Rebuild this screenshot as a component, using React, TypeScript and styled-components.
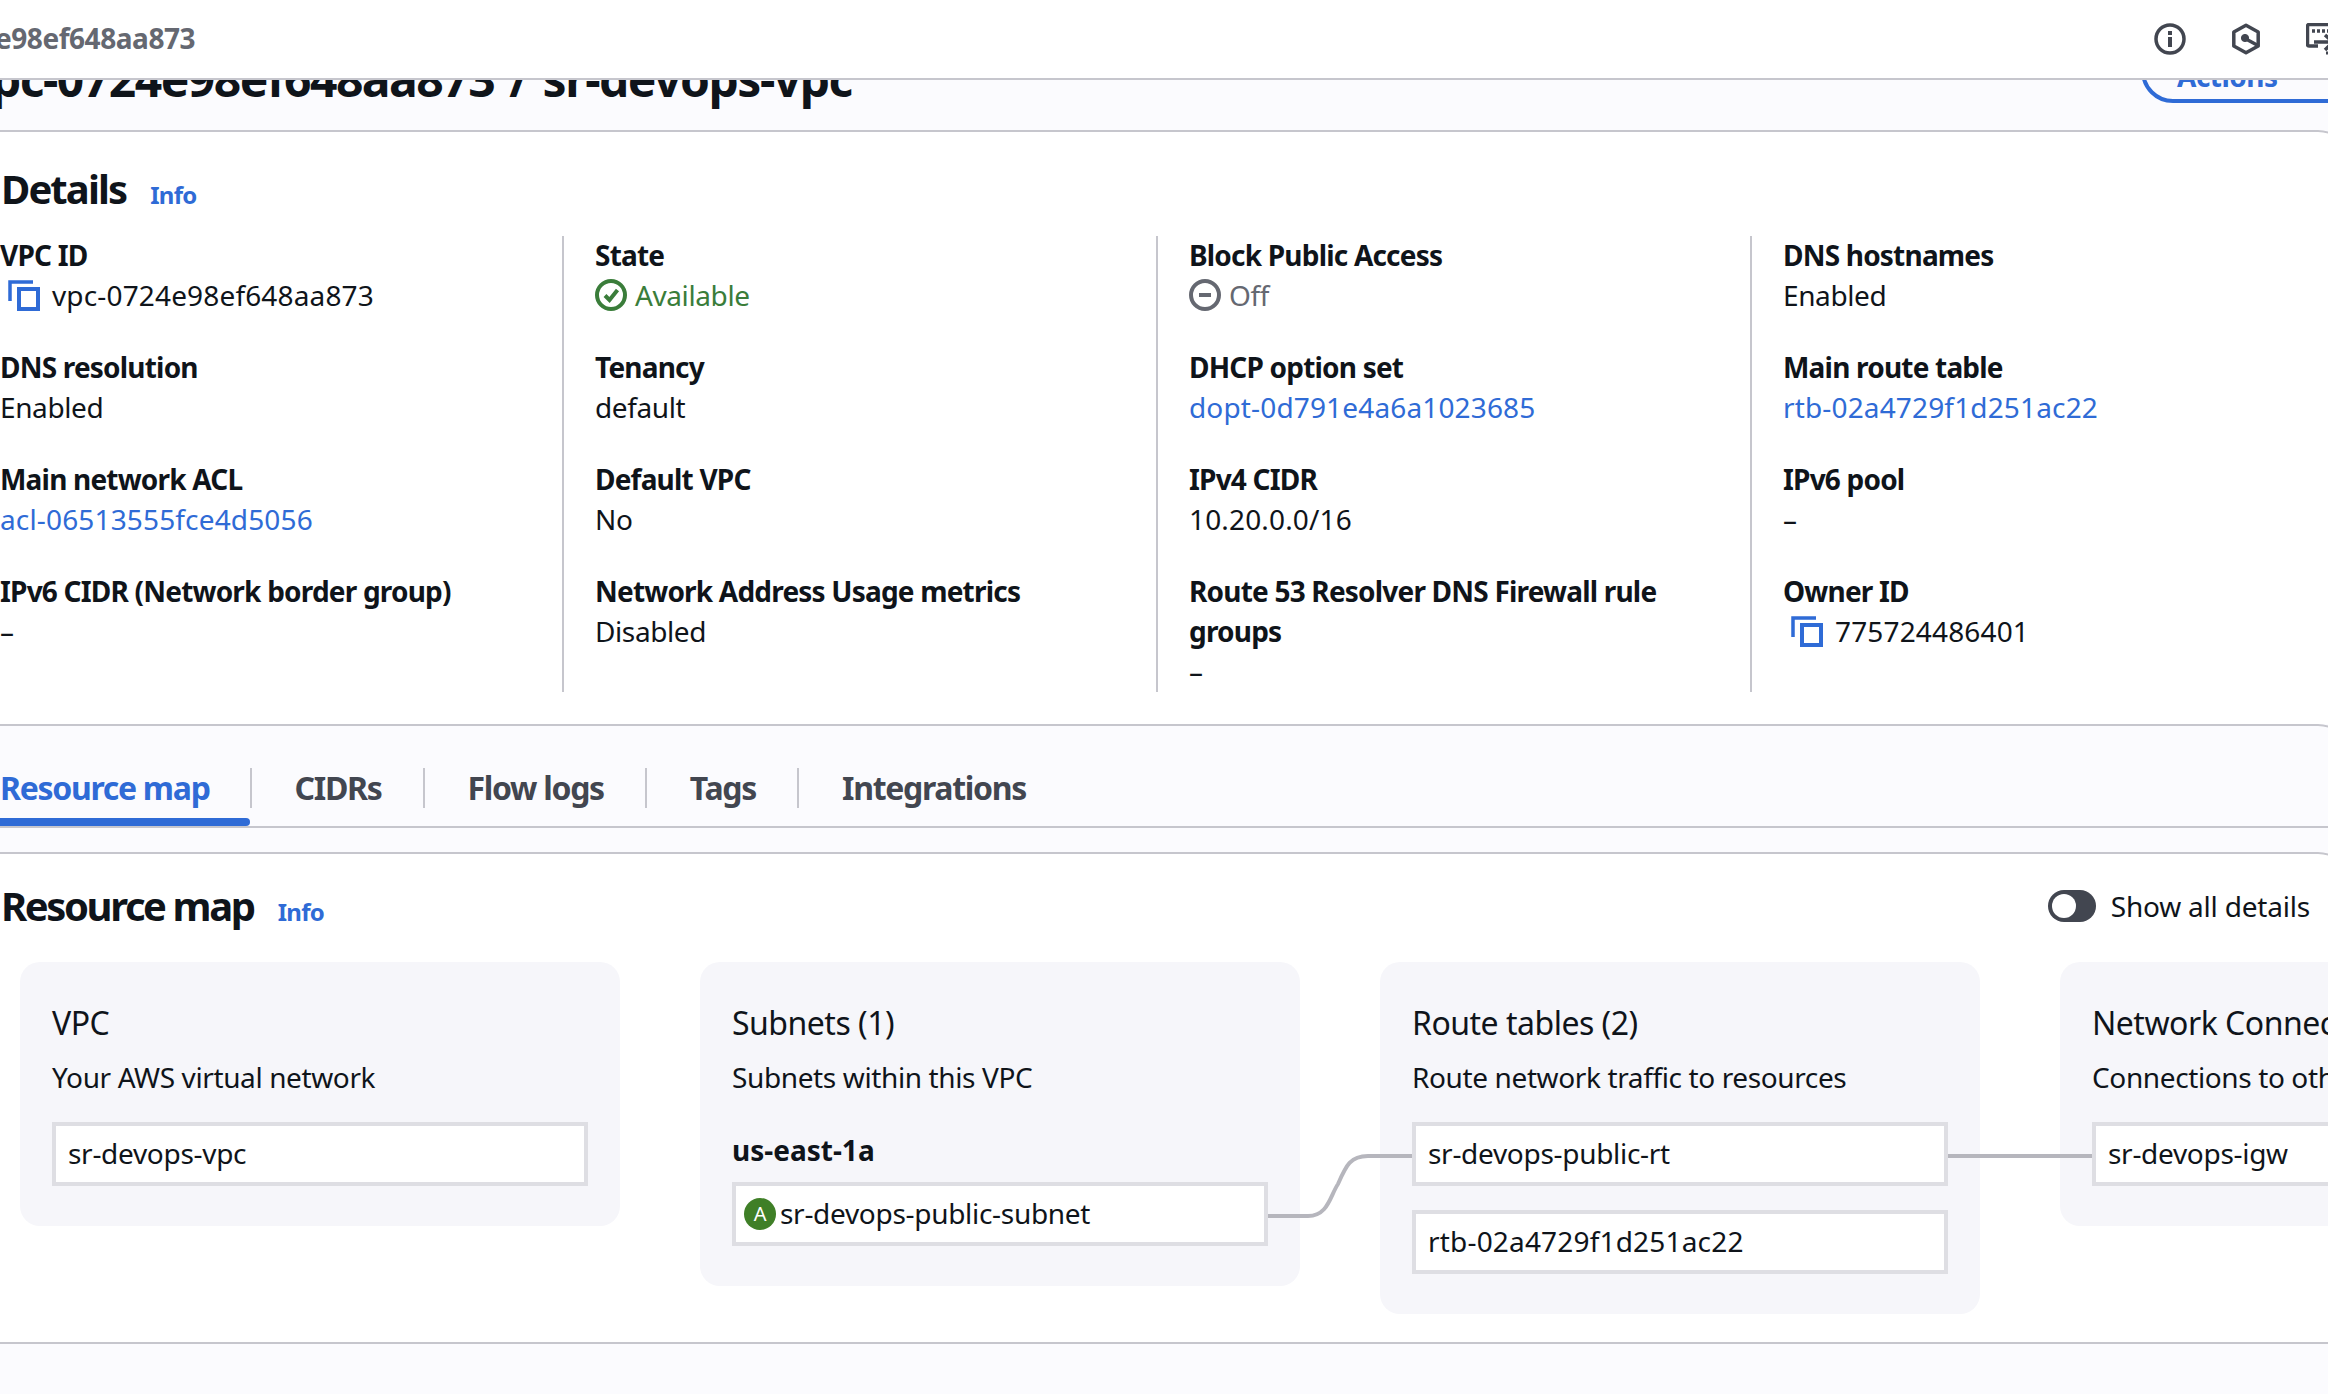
import styled, { createGlobalStyle } from 'styled-components';

const GlobalStyle = createGlobalStyle`
  html, body {
    margin: 0;
    padding: 0;
    background: #fbfbfe;
  }
  body {
    font-family: "Noto Sans", "Open Sans", sans-serif;
    color: #0f141a;
  }
`;

const Page = styled.div`
  width: 2328px;
  height: 1394px;
  overflow: hidden;
  background: #fbfbfe;
`;

const TopBar = styled.header`
  height: 78px;
  display: flex;
  align-items: center;
  background: #fff;
  border-bottom: 2px solid #c6c6cd;
  position: relative;
  z-index: 1;
`;

const Crumb = styled.span`
  margin-left: -5px;
  padding-bottom: 3px;
  font-size: 28px;
  font-weight: 700;
  letter-spacing: -0.45px;
  color: #656871;
`;

const TopIcons = styled.div`
  display: flex;
  gap: 44px;
  margin-left: auto;
  margin-right: -10px;
  color: #424650;
`;

const TitleBand = styled.div`
  height: 50px;
  overflow: hidden;
  display: flex;
  justify-content: space-between;
  align-items: flex-start;
`;

const PageTitle = styled.h1`
  margin: -31px 0 0 -35px;
  font-size: 48px;
  line-height: 60px;
  font-weight: 700;
  letter-spacing: -1.5px;
  word-spacing: 4px;
  white-space: nowrap;
`;

const ActionsButton = styled.button`
  flex: none;
  width: 240px;
  height: 64px;
  margin: -41px -53px 0 0;
  padding: 10px 0 0 32px;
  box-sizing: border-box;
  display: flex;
  align-items: center;
  gap: 24px;
  background: transparent;
  border: 4px solid #2f6bd6;
  border-radius: 40px;
  color: #2f6bd6;
  font: 700 28px/40px "Noto Sans", sans-serif;
  letter-spacing: -0.5px;
`;

const Panel = styled.section`
  width: 2350px;
  box-sizing: border-box;
  background: #fff;
  border-top: 2px solid #c6c6cd;
  border-top-right-radius: 32px;
`;

const DetailsPanel = styled(Panel)`
  height: 594px;
  padding-top: 33px;
`;

const HeadingRow = styled.div`
  display: flex;
  align-items: baseline;
  gap: 24px;
`;

const SectionTitle = styled.h2`
  margin: 0 0 0 1px;
  font-size: 40px;
  line-height: 48px;
  font-weight: 700;
  letter-spacing: -1.9px;
`;

const MapTitle = styled(SectionTitle)`
  letter-spacing: -2.4px;
`;

const InfoLink = styled.a`
  font-size: 24px;
  font-weight: 700;
  letter-spacing: -0.7px;
  color: #2f6bd6;
`;

const DetailColumns = styled.div`
  display: grid;
  grid-template-columns: 562px 594px 594px 578px;
  margin-top: 23px;
  width: 2328px;
`;

const DetailColumn = styled.div<{ $first?: boolean }>`
  height: 456px;
  padding-left: ${(p) => (p.$first ? '0' : '31px')};
  border-left: ${(p) => (p.$first ? 'none' : '2px solid #c6c6cd')};
`;

const FieldStack = styled.div`
  display: flex;
  flex-direction: column;
  gap: 32px;
  margin-top: -1px;
`;

const Field = styled.div`
  font-size: 28px;
  line-height: 40px;
`;

const FieldLabel = styled.div`
  font-weight: 700;
  letter-spacing: -0.8px;
`;

const FieldValue = styled.div<{ $tone?: 'link' | 'green' | 'grey'; $numeric?: boolean }>`
  display: flex;
  align-items: center;
  letter-spacing: ${(p) => (p.$numeric ? '0.15px' : '-0.4px')};
  color: ${(p) =>
    p.$tone === 'link'
      ? '#2f6bd6'
      : p.$tone === 'green'
        ? '#3a7d3a'
        : p.$tone === 'grey'
          ? '#656871'
          : '#0f141a'};
  svg {
    flex: none;
  }
`;

const CopyWrap = styled.span`
  display: inline-flex;
  margin: 0 12px 0 8px;
`;

const StatusWrap = styled.span`
  display: inline-flex;
  margin-right: 8px;
`;

const TabsPanel = styled(Panel)`
  background: #fbfbfe;
  height: 128px;
`;

const TabRow = styled.div`
  width: 2328px;
  height: 58px;
  padding-top: 42px;
  display: flex;
  align-items: flex-start;
  border-bottom: 2px solid #c6c6cd;
`;

const Tab = styled.div<{ $active?: boolean; $last?: boolean }>`
  position: relative;
  height: 40px;
  padding: ${(p) => (p.$active ? '0 40px 0 0' : '0 41px 0 43px')};
  border-right: ${(p) => (p.$last ? 'none' : '2px solid #c6c6cd')};
  font-size: 32px;
  line-height: 40px;
  font-weight: 700;
  letter-spacing: -1.3px;
  color: ${(p) => (p.$active ? '#2f6bd6' : '#424650')};

  ${(p) =>
    p.$active &&
    `&::after {
      content: '';
      position: absolute;
      left: 0;
      right: 0;
      bottom: -18px;
      height: 8px;
      background: #2f6bd6;
      border-radius: 0 4px 4px 0;
    }`}
`;

const MapPanel = styled(Panel)`
  height: 492px;
  padding-top: 28px;
  border-bottom: 2px solid #c6c6cd;
  border-bottom-right-radius: 0;
`;

const MapHeader = styled.div`
  width: 2328px;
  box-sizing: border-box;
  padding-right: 18px;
  display: flex;
  align-items: center;
  justify-content: space-between;
`;

const ToggleRow = styled.div`
  display: flex;
  align-items: center;
  gap: 15px;
  font-size: 28px;
  line-height: 40px;
  letter-spacing: -0.2px;
`;

const ToggleTrack = styled.span`
  width: 48px;
  height: 32px;
  box-sizing: border-box;
  padding: 4px;
  border-radius: 16px;
  background: #424650;
`;

const ToggleKnob = styled.span`
  display: block;
  width: 24px;
  height: 24px;
  border-radius: 50%;
  background: #fff;
`;

const MapBody = styled.div`
  position: relative;
  width: 2328px;
  margin-top: 32px;
  padding-left: 20px;
  box-sizing: border-box;
  display: flex;
  align-items: flex-start;
  gap: 80px;
`;

const Connectors = styled.svg`
  position: absolute;
  left: 0;
  top: 0;
  pointer-events: none;
`;

const Card = styled.div`
  flex: none;
  width: 600px;
  box-sizing: border-box;
  padding: 41px 32px 40px;
  background: #f6f6fa;
  border-radius: 20px;
`;

const CardTitle = styled.div`
  font-size: 32px;
  line-height: 40px;
  letter-spacing: -0.5px;
  white-space: nowrap;
`;

const CardText = styled.div`
  margin-top: 14px;
  font-size: 28px;
  line-height: 40px;
  letter-spacing: -0.38px;
  white-space: nowrap;
`;

const ZoneLabel = styled.div`
  margin-top: 33px;
  font-size: 28px;
  line-height: 40px;
  font-weight: 700;
`;

const NodeList = styled.div<{ $tight?: boolean }>`
  margin-top: ${(p) => (p.$tight ? '12px' : '25px')};
  display: flex;
  flex-direction: column;
  gap: 24px;
`;

const Node = styled.div<{ $badge?: boolean; $numeric?: boolean }>`
  width: 536px;
  height: 64px;
  box-sizing: border-box;
  display: flex;
  align-items: center;
  gap: 4px;
  padding: 0 0 2px ${(p) => (p.$badge ? '8px' : '12px')};
  background: #fff;
  border: 4px solid #dedee3;
  font-size: 28px;
  letter-spacing: ${(p) => (p.$numeric ? '0.18px' : '-0.3px')};
  white-space: nowrap;
`;

const AzBadge = styled.span`
  width: 32px;
  height: 32px;
  flex: none;
  display: flex;
  align-items: center;
  justify-content: center;
  margin-top: 2px;
  border-radius: 50%;
  background: #3f7f27;
  color: #fff;
  font-size: 20px;
  line-height: 32px;
`;

const InfoIcon = () => (
  <svg width="32" height="32" viewBox="0 0 32 32" fill="none" stroke="currentColor">
    <circle cx="16" cy="16" r="14" strokeWidth="3.5" />
    <path d="M16 14v10" strokeWidth="4" />
    <path d="M16 8v4" strokeWidth="4" />
  </svg>
);

const HexIcon = () => (
  <svg width="32" height="32" viewBox="0 0 32 32" fill="none" stroke="currentColor">
    <path d="M16 2.2 L28.2 9 V23 L16 29.8 L3.8 23 V9 Z" strokeWidth="3.5" strokeLinejoin="round" />
    <circle cx="15" cy="15" r="3.6" fill="currentColor" strokeWidth="1" />
    <path d="M16 16 L27 22" strokeWidth="3.5" />
  </svg>
);

const ShellIcon = () => (
  <svg width="32" height="32" viewBox="0 0 32 32" fill="none" stroke="currentColor">
    <path d="M12 23H3a1.5 1.5 0 0 1-1.5-1.5V3A1.5 1.5 0 0 1 3 1.5h30" strokeWidth="3.5" />
    <path d="M6 8h3M11 8h3M16 8h3M21 8h3" strokeWidth="3.5" />
    <path d="M8 19h18M19 12l8 7-8 8" strokeWidth="3.5" />
    <path d="M20 30h3" strokeWidth="3" />
  </svg>
);

const CopyIcon = () => (
  <svg width="32" height="32" viewBox="0 0 32 32" fill="none" stroke="#2f6bd6" strokeWidth="4">
    <path d="M2 22V3h23" strokeWidth="3.5" />
    <rect x="11" y="10" width="19" height="20" />
  </svg>
);

const CheckIcon = () => (
  <svg width="32" height="32" viewBox="0 0 32 32" fill="none" stroke="currentColor" strokeWidth="4">
    <circle cx="16" cy="16" r="14" />
    <path d="M10 16.5l4.5 4.5 8-10" />
  </svg>
);

const OffIcon = () => (
  <svg width="32" height="32" viewBox="0 0 32 32" fill="none" stroke="currentColor" strokeWidth="4">
    <circle cx="16" cy="16" r="14" />
    <path d="M10 16h12" />
  </svg>
);

type FieldData = {
  label: string;
  value: string;
  tone?: 'link' | 'green' | 'grey';
  icon?: 'copy' | 'check' | 'off';
};

const columns: FieldData[][] = [
  [
    { label: 'VPC ID', value: 'vpc-0724e98ef648aa873', icon: 'copy' },
    { label: 'DNS resolution', value: 'Enabled' },
    { label: 'Main network ACL', value: 'acl-06513555fce4d5056', tone: 'link' },
    { label: 'IPv6 CIDR (Network border group)', value: '–' },
  ],
  [
    { label: 'State', value: 'Available', tone: 'green', icon: 'check' },
    { label: 'Tenancy', value: 'default' },
    { label: 'Default VPC', value: 'No' },
    { label: 'Network Address Usage metrics', value: 'Disabled' },
  ],
  [
    { label: 'Block Public Access', value: 'Off', tone: 'grey', icon: 'off' },
    { label: 'DHCP option set', value: 'dopt-0d791e4a6a1023685', tone: 'link' },
    { label: 'IPv4 CIDR', value: '10.20.0.0/16' },
    { label: 'Route 53 Resolver DNS Firewall rule groups', value: '–' },
  ],
  [
    { label: 'DNS hostnames', value: 'Enabled' },
    { label: 'Main route table', value: 'rtb-02a4729f1d251ac22', tone: 'link' },
    { label: 'IPv6 pool', value: '–' },
    { label: 'Owner ID', value: '775724486401', icon: 'copy' },
  ],
];

const tabs = ['Resource map', 'CIDRs', 'Flow logs', 'Tags', 'Integrations'];

const renderIcon = (icon?: FieldData['icon']) => {
  if (icon === 'copy') {
    return (
      <CopyWrap>
        <CopyIcon />
      </CopyWrap>
    );
  }
  if (icon === 'check') {
    return (
      <StatusWrap>
        <CheckIcon />
      </StatusWrap>
    );
  }
  if (icon === 'off') {
    return (
      <StatusWrap>
        <OffIcon />
      </StatusWrap>
    );
  }
  return null;
};

const App = () => {
  return (
    <Page>
      <GlobalStyle />
      <TopBar>
        <Crumb>e98ef648aa873</Crumb>
        <TopIcons>
          <InfoIcon />
          <HexIcon />
          <ShellIcon />
        </TopIcons>
      </TopBar>
      <TitleBand>
        <PageTitle>vpc-0724e98ef648aa873 / sr-devops-vpc</PageTitle>
        <ActionsButton>
          Actions
          <svg width="20" height="20" viewBox="0 0 20 20" fill="#2f6bd6">
            <path d="M3 5h14l-7 9z" />
          </svg>
        </ActionsButton>
      </TitleBand>

      <DetailsPanel>
        <HeadingRow>
          <SectionTitle>Details</SectionTitle>
          <InfoLink>Info</InfoLink>
        </HeadingRow>
        <DetailColumns>
          {columns.map((fields, i) => (
            <DetailColumn key={i} $first={i === 0}>
              <FieldStack>
                {fields.map((f) => (
                  <Field key={f.label}>
                    <FieldLabel>{f.label}</FieldLabel>
                    <FieldValue $tone={f.tone} $numeric={/\d/.test(f.value)}>
                      {renderIcon(f.icon)}
                      {f.value}
                    </FieldValue>
                  </Field>
                ))}
              </FieldStack>
            </DetailColumn>
          ))}
        </DetailColumns>
      </DetailsPanel>

      <TabsPanel>
        <TabRow>
          {tabs.map((t, i) => (
            <Tab key={t} $active={i === 0} $last={i === tabs.length - 1}>
              {t}
            </Tab>
          ))}
        </TabRow>
      </TabsPanel>

      <MapPanel>
        <MapHeader>
          <HeadingRow>
            <MapTitle>Resource map</MapTitle>
            <InfoLink>Info</InfoLink>
          </HeadingRow>
          <ToggleRow>
            <ToggleTrack>
              <ToggleKnob />
            </ToggleTrack>
            Show all details
          </ToggleRow>
        </MapHeader>
        <MapBody>
          <Card>
            <CardTitle>VPC</CardTitle>
            <CardText>Your AWS virtual network</CardText>
            <NodeList>
              <Node>sr-devops-vpc</Node>
            </NodeList>
          </Card>
          <Card>
            <CardTitle>Subnets (1)</CardTitle>
            <CardText>Subnets within this VPC</CardText>
            <ZoneLabel>us-east-1a</ZoneLabel>
            <NodeList $tight>
              <Node $badge>
                <AzBadge>A</AzBadge>
                sr-devops-public-subnet
              </Node>
            </NodeList>
          </Card>
          <Card>
            <CardTitle>Route tables (2)</CardTitle>
            <CardText>Route network traffic to resources</CardText>
            <NodeList>
              <Node>sr-devops-public-rt</Node>
              <Node $numeric>rtb-02a4729f1d251ac22</Node>
            </NodeList>
          </Card>
          <Card>
            <CardTitle>Network Connections (1)</CardTitle>
            <CardText>Connections to other networks</CardText>
            <NodeList>
              <Node>sr-devops-igw</Node>
            </NodeList>
          </Card>
          {/* viewBox starts at the top of the map row, y = 962 */}
          <Connectors width="2328" height="360" viewBox="0 962 2328 360" fill="none" stroke="#b6b6bd" strokeWidth="4">
            <path d="M1268 1216H1308C1328 1216 1330 1196 1338 1184C1346 1166 1350 1156 1368 1156H1412" />
            <path d="M1948 1156H2092" />
          </Connectors>
        </MapBody>
      </MapPanel>
    </Page>
  );
};

export default App;
